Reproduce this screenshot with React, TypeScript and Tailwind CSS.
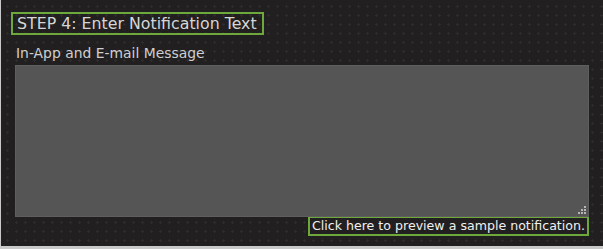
import React from "react";

function Grip() {
  // dotted resize corner, like the reference
  const dots = [
    [6, 0],
    [3, 3],
    [6, 3],
    [0, 6],
    [3, 6],
    [6, 6],
  ];
  return (
    <svg width="8" height="8" className="absolute right-[3px] bottom-[3px] pointer-events-none">
      {dots.map(([x, y], i) => (
        <rect key={i} x={x} y={y} width="2" height="2" fill="#b5b5b5" />
      ))}
    </svg>
  );
}

export default function App() {
  const [message, setMessage] = React.useState("");

  return (
    <div className="w-[603px] h-[249px] bg-[#c9c9c9] pb-[3px] pl-[1px] overflow-hidden font-['DejaVu_Sans',sans-serif]">
      <div className="h-full bg-[#221f20] bg-[radial-gradient(circle,#2f2c2d_1px,transparent_1.2px)] bg-[size:9px_9px] bg-[position:2px_2px] pl-[10px] pr-[14px] pt-[12px] flex flex-col">
        <div className="self-start border-2 border-[#6ea83c] pl-[4px] pr-[5px] h-[23px] flex items-center text-[15.8px] leading-none text-[#d6d6d6]">
          STEP 4: Enter Notification Text
        </div>
        <label className="mt-[12px] ml-[5px] text-[13.9px] leading-none text-[#cfcfcf]">In-App and E-mail Message</label>
        <div className="relative mt-[4px] ml-[4px]">
          <textarea
            value={message}
            onChange={(e) => setMessage(e.target.value)}
            className="block w-full h-[152px] bg-[#555555] border border-[#5e5e5e] outline-none resize-none text-[13px] text-white p-2"
          />
          <Grip />
        </div>
        <div className="self-end -mt-[1px] border-2 border-[#6ea83c] bg-[#221f20] px-[2px] h-[20px] flex items-center text-[12.6px] leading-none text-[#f0f0f0] cursor-pointer">
          Click here to preview a sample notification.
        </div>
      </div>
    </div>
  );
}
